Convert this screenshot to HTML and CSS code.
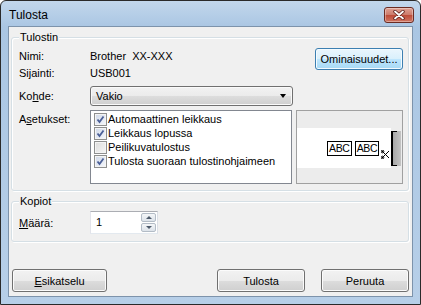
FILE: index.html
```html
<!DOCTYPE html>
<html>
<head>
    <title>Tulosta</title>
    <link rel="stylesheet" href="styles.css">
</head>
<body>
    <div class="window">
        <div class="titlebar">
            <span class="title">Tulosta</span>
            <button class="close">
                <svg width="14" height="10" viewBox="0 0 14 10">
                    <path d="M3 1.5 L11 8.5 M11 1.5 L3 8.5" stroke="#5a1e18" stroke-width="3.4" stroke-linecap="round"/>
                    <path d="M3 1.5 L11 8.5 M11 1.5 L3 8.5" stroke="#fff" stroke-width="1.8" stroke-linecap="round"/>
                </svg>
            </button>
        </div>

        <div class="client">
            <fieldset class="group printer">
                <legend>Tulostin</legend>

                <div class="info">
                    <div class="info-lines">
                        <span>Nimi:</span><span>Brother&nbsp; XX-XXX</span>
                        <span>Sijainti:</span><span>USB001</span>
                    </div>
                    <button class="btn btn-default">Ominaisuudet...</button>
                </div>

                <div class="field target">
                    <label>Ko<u>h</u>de:</label>
                    <div class="combo">
                        <span>Vakio</span>
                        <span class="arrow"></span>
                    </div>
                </div>

                <div class="field settings">
                    <label>A<u>s</u>etukset:</label>
                    <div class="listbox">
                        <div class="item"><span class="check on"></span>Automaattinen leikkaus</div>
                        <div class="item"><span class="check on"></span>Leikkaus lopussa</div>
                        <div class="item"><span class="check"></span>Peilikuvatulostus</div>
                        <div class="item"><span class="check on"></span>Tulosta suoraan tulostinohjaimeen</div>
                    </div>
                    <div class="preview">
                        <div class="tape">
                            <span class="tag">ABC</span>
                            <span class="tag">ABC</span>
                            <svg class="cut" width="9" height="9" viewBox="0 0 9 9">
                                <path d="M1 1 L8 8 M1 8 L8 1" stroke="#000" stroke-width="1"/>
                                <circle cx="1.5" cy="1.5" r="1.3" fill="none" stroke="#000" stroke-width="1"/>
                                <circle cx="1.5" cy="7.5" r="1.3" fill="none" stroke="#000" stroke-width="1"/>
                            </svg>
                            <span class="tape-end"></span>
                        </div>
                    </div>
                </div>
            </fieldset>

            <fieldset class="group copies">
                <legend>Kopiot</legend>
                <div class="field">
                    <label><u>M</u>äärä:</label>
                    <div class="spin">
                        <span class="spin-value">1</span>
                        <div class="spin-buttons">
                            <span class="spin-btn up"></span>
                            <span class="spin-btn down"></span>
                        </div>
                    </div>
                </div>
            </fieldset>

            <div class="actions">
                <button class="btn preview-btn"><u>E</u>sikatselu</button>
                <div class="actions-right">
                    <button class="btn">Tulosta</button>
                    <button class="btn">Peruuta</button>
                </div>
            </div>
        </div>
    </div>
</body>
</html>
```

FILE: styles.css
```css
* {
    box-sizing: border-box;
}

body {
    margin: 0;
    font-family: "Liberation Sans", Arial, sans-serif;
    font-size: 11px;
    color: #000;
    background: #fff;
}

.window {
    width: 421px;
    height: 305px;
    background: linear-gradient(#c2d7ec, #aac6e3 26px, #b7cfe8);
    border: 1px solid #2a2a2a;
    border-radius: 6px 6px 0 0;
    padding: 0 7px 7px;
    display: flex;
    flex-direction: column;
}

.titlebar {
    height: 25px;
    display: flex;
    justify-content: space-between;
}

.title {
    font-size: 12px;
    padding: 7px 0 0 1px;
}

.close {
    width: 30px;
    height: 16px;
    margin: 6px -1px 0 0;
    padding: 0;
    border: 1px solid #6b2b22;
    border-radius: 3px;
    background: linear-gradient(#dfa194, #cc7a6a 50%, #bd4a37 50%, #cf7562);
    box-shadow: inset 0 0 0 1px rgba(255, 255, 255, 0.35);
    display: flex;
    align-items: center;
    justify-content: center;
}

.client {
    flex: 1;
    background: #f0f0f0;
    border: 1px solid #7d93ab;
    padding: 4px 3px 4px 2px;
    display: flex;
    flex-direction: column;
}

.group {
    margin: 0;
    border: 1px solid #d5dfe5;
    border-radius: 3px;
    box-shadow: inset 1px 1px 0 #fff, 1px 1px 0 #fff;
    min-width: 0;
}

.group legend {
    padding: 0 1px;
    line-height: 13px;
    background: #f0f0f0;
}

.printer {
    padding: 4px 5px 6px 7px;
}

.copies {
    margin-top: 4px;
    padding: 3px 5px 7px 7px;
}

.info {
    display: flex;
    justify-content: space-between;
    align-items: flex-start;
}

.info-lines {
    display: grid;
    grid-template-columns: 71px auto;
    row-gap: 3px;
    line-height: 14px;
    padding-top: 1px;
}

.field {
    display: flex;
    align-items: flex-start;
}

.field label {
    width: 71px;
    flex-shrink: 0;
    line-height: 14px;
}

.target {
    margin-top: 6px;
    align-items: center;
}

.combo {
    width: 203px;
    height: 20px;
    border: 1px solid #707070;
    border-radius: 3px;
    background: linear-gradient(#f2f2f2, #ebebeb 50%, #dddddd 50%, #cfcfcf);
    box-shadow: inset 0 0 0 1px #fafafa;
    display: flex;
    align-items: center;
    justify-content: space-between;
    padding: 0 6px 0 5px;
}

.arrow {
    width: 0;
    height: 0;
    border-left: 3.5px solid transparent;
    border-right: 3.5px solid transparent;
    border-top: 4px solid #000;
}

.settings {
    margin-top: 4px;
}

.settings label {
    padding-top: 2px;
}

.listbox {
    width: 203px;
    height: 74px;
    border: 1px solid #828790;
    background: #fff;
    padding: 1px 3px;
}

.item {
    display: flex;
    align-items: center;
    height: 14px;
    white-space: nowrap;
}

.check {
    width: 13px;
    height: 13px;
    margin-right: 1px;
    border: 1px solid #8e8f8f;
    background: linear-gradient(135deg, #dcdcdc, #f6f6f6);
    box-shadow: inset 0 0 0 1px #f4f4f4;
    flex-shrink: 0;
}

.check.on {
    background:
        url("data:image/svg+xml,%3Csvg xmlns='http://www.w3.org/2000/svg' width='11' height='11'%3E%3Cpath d='M2.5 5.5 L4.5 8 L8.5 2.5' fill='none' stroke='%234a5f97' stroke-width='1.8'/%3E%3C/svg%3E") center/11px 11px no-repeat,
        linear-gradient(135deg, #cfd8e8, #f6f8fc);
}

.preview {
    width: 107px;
    height: 74px;
    margin-left: 4px;
    border: 1px solid #a0a0a0;
    background: #ececec;
    padding-top: 17px;
}

.tape {
    height: 40px;
    width: 94px;
    background: #fff;
    display: flex;
    align-items: center;
    justify-content: flex-end;
}

.tag {
    border: 1px solid #000;
    height: 15px;
    line-height: 13px;
    padding: 0 1px;
    font-size: 10.5px;
    letter-spacing: -0.3px;
    margin-left: 3px;
}

.cut {
    align-self: flex-end;
    margin: 0 1px 9px 2px;
}

.tape-end {
    width: 10px;
    height: 35px;
    margin-right: -10px;
    background: linear-gradient(90deg, #a8a8a8, #c4c4c4);
    border-left: 2px solid #000;
    position: relative;
}

.tape-end::before,
.tape-end::after {
    content: "";
    position: absolute;
    left: 0;
    width: 4px;
    height: 1px;
    background: #000;
}

.tape-end::before {
    top: 0;
}

.tape-end::after {
    bottom: 0;
}

.copies label {
    align-self: center;
}

.spin {
    width: 68px;
    height: 23px;
    border: 1px solid #abadb3;
    border-color: #abadb3 #dbdfe6 #e3e9ef #e2e3ea;
    background: #fff;
    display: flex;
    justify-content: space-between;
    padding: 1px 1px 1px 5px;
}

.spin-value {
    line-height: 18px;
}

.spin-buttons {
    width: 15px;
    display: flex;
    flex-direction: column;
    gap: 1px;
}

.spin-btn {
    flex: 1;
    border: 1px solid #b3bcc6;
    border-radius: 2px;
    background: linear-gradient(#f4f6f8, #dde3ea);
    display: flex;
    align-items: center;
    justify-content: center;
}

.spin-btn::after {
    content: "";
    border-left: 3px solid transparent;
    border-right: 3px solid transparent;
}

.up::after {
    border-bottom: 3px solid #4d5a6b;
}

.down::after {
    border-top: 3px solid #4d5a6b;
}

.actions {
    margin-top: auto;
    display: flex;
    justify-content: space-between;
    padding-left: 1px;
}

.actions-right {
    display: flex;
    gap: 16px;
}

.btn {
    height: 23px;
    width: 88px;
    font-family: inherit;
    font-size: 11px;
    color: #000;
    border: 1px solid #707070;
    border-radius: 3px;
    background: linear-gradient(#f2f2f2, #ebebeb 50%, #dddddd 50%, #cfcfcf);
    box-shadow: inset 0 0 0 1px #fbfbfb;
    padding: 0;
}

.preview-btn {
    width: 95px;
}

.btn-default {
    height: 22px;
    border-color: #3c7fb1;
    background: linear-gradient(#eaf6fd, #d9f0fc 50%, #bee6fd 50%, #a7d9f5);
    box-shadow: inset 0 0 0 1px #f4fbff;
}
```
